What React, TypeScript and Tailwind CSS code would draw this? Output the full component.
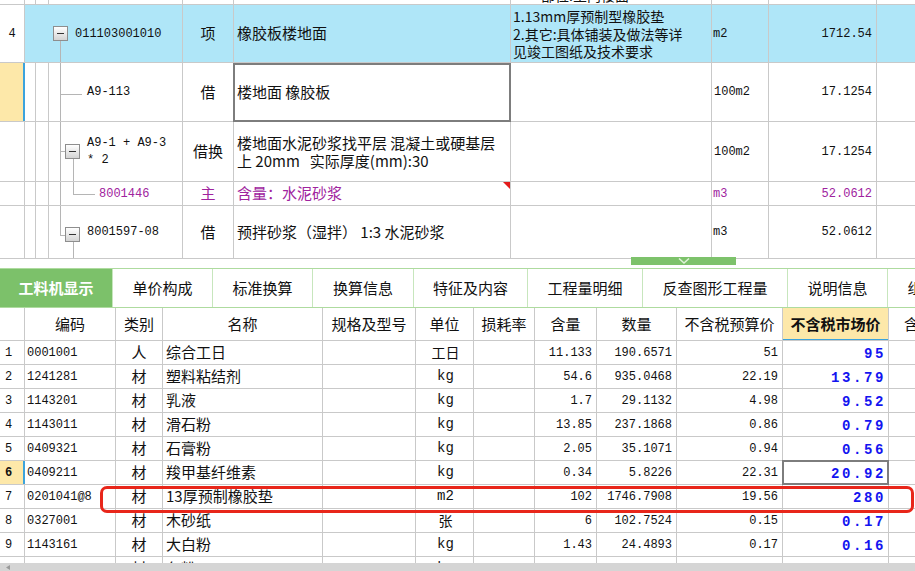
import type { ReactNode } from 'react'
import clsx from 'clsx'

const mono = "font-['Liberation_Mono','Noto_Sans_CJK_SC',monospace]"
const cjk = "font-['Noto_Sans_CJK_SC','Noto_Sans',sans-serif]"

function Cell({ className, children }: { className?: string; children?: ReactNode }) {
  return <div className={clsx('relative shrink-0 border-r border-[#c9c9c9]', className)}>{children}</div>
}

function Toggle({ className }: { className: string }) {
  return (
    <span
      className={clsx(
        'absolute flex h-[15px] w-[15px] items-center justify-center border border-[#8e8e8e] bg-linear-to-b from-white to-[#d4d4d4]',
        className,
      )}
    >
      <span className="h-px w-[7px] bg-[#333]" />
    </span>
  )
}

function VLine({ className }: { className: string }) {
  return <span className={clsx('absolute w-px bg-[#b5b5b5]', className)} />
}

function HLine({ className }: { className: string }) {
  return <span className={clsx('absolute h-px bg-[#b5b5b5]', className)} />
}

function TopSection() {
  return (
    <div className={clsx('shrink-0 text-[#111]', cjk)}>
      {/* row cut off at the top */}
      <div className="flex h-[5px] overflow-hidden border-b border-[#c9c9c9]">
        <Cell className="w-[25px]" />
        <Cell className="w-[11px]" />
        <Cell className="w-[13px]" />
        <Cell className="w-[134px]" />
        <Cell className="w-[51px]" />
        <Cell className="w-[277px]" />
        <Cell className="w-[201px] overflow-hidden">
          <div className="-mt-[13px] pl-[30px] text-[14px] leading-[17px]">部位:室内楼面</div>
        </Cell>
        <Cell className="w-[57px]" />
        <Cell className="w-[108px]" />
      </div>

      {/* 4 */}
      <div className="flex h-[58px] border-b border-[#c9c9c9]">
        <Cell className={clsx('flex w-[25px] items-center justify-center bg-white text-[12px]', mono)}>4</Cell>
        <Cell className={clsx('flex w-[158px] items-center bg-[#afe6f8] pl-[50px] text-[12px]', mono)}>
          <Toggle className="left-[28px] top-[21px]" />
          <VLine className="left-[35px] top-[36px] bottom-0" />
          011103001010
        </Cell>
        <Cell className="flex w-[51px] items-center justify-center bg-[#afe6f8] text-[15px]">项</Cell>
        <Cell className="flex w-[277px] items-center bg-[#afe6f8] pl-[3px] text-[15px]">橡胶板楼地面</Cell>
        <Cell className="flex w-[201px] flex-col justify-center bg-[#afe6f8] pl-[2px] pt-[2px] text-[14px] leading-[17.5px]">
          <span>1.13mm厚预制型橡胶垫</span>
          <span>2.其它:具体铺装及做法等详</span>
          <span>见竣工图纸及技术要求</span>
        </Cell>
        <Cell className={clsx('flex w-[57px] items-center bg-[#afe6f8] pl-[1px] text-[12px]', mono)}>m2</Cell>
        <Cell className={clsx('flex w-[108px] items-center justify-end bg-[#afe6f8] pr-[4px] text-[12px]', mono)}>
          1712.54
        </Cell>
        <div className="flex-1 bg-[#afe6f8]" />
      </div>

      {/* A9-113 */}
      <div className="flex h-[59px] border-b border-[#c9c9c9]">
        <div className="w-[25px] shrink-0 border-r-2 border-[#3ca3dc] bg-[#fde8a9]" />
        <Cell className="w-[11px]" />
        <Cell className="w-[13px]" />
        <Cell className={clsx('flex w-[134px] items-center pl-[38px] text-[12px]', mono)}>
          <VLine className="left-[11px] top-0 bottom-0" />
          <HLine className="left-[11px] top-[31px] w-[22px]" />
          A9-113
        </Cell>
        <Cell className="flex w-[51px] items-center justify-center text-[15px]">借</Cell>
        <Cell className="flex w-[277px] items-center pl-[3px] text-[15px]">
          <span className="absolute -left-px top-0 -right-px -bottom-px border-2 border-[#7d7d7d]" />
          楼地面 橡胶板
        </Cell>
        <Cell className="w-[201px]" />
        <Cell className={clsx('flex w-[57px] items-center pl-[2px] text-[12px]', mono)}>100m2</Cell>
        <Cell className={clsx('flex w-[108px] items-center justify-end pr-[4px] text-[12px]', mono)}>17.1254</Cell>
      </div>

      {/* A9-1 + A9-3 * 2 */}
      <div className="flex h-[60px] border-b border-[#c9c9c9]">
        <Cell className="w-[25px]" />
        <Cell className="w-[11px]" />
        <Cell className="w-[13px]" />
        <Cell className={clsx('flex w-[134px] flex-col justify-center pl-[38px] text-[12px] leading-[17px]', mono)}>
          <VLine className="left-[11px] top-0 bottom-0" />
          <HLine className="left-[11px] top-[29px] w-[5px]" />
          <Toggle className="left-[16px] top-[22px]" />
          <VLine className="left-[24px] top-[37px] bottom-0" />
          <span className="whitespace-pre">A9-1 + A9-3</span>
          <span>* 2</span>
        </Cell>
        <Cell className="flex w-[51px] items-center justify-center text-[15px]">借换</Cell>
        <Cell className="flex w-[277px] flex-col justify-center pl-[3px] text-[15px] leading-[18px]">
          <span>楼地面水泥砂浆找平层 混凝土或硬基层</span>
          <span className="whitespace-pre">上 20mm   实际厚度(mm):30</span>
        </Cell>
        <Cell className="w-[201px]" />
        <Cell className={clsx('flex w-[57px] items-center pl-[2px] text-[12px]', mono)}>100m2</Cell>
        <Cell className={clsx('flex w-[108px] items-center justify-end pr-[4px] text-[12px]', mono)}>17.1254</Cell>
      </div>

      {/* 8001446 */}
      <div className="flex h-[24px] border-b border-[#c9c9c9] text-[#a0239e]">
        <Cell className="w-[25px]" />
        <Cell className="w-[11px]" />
        <Cell className="w-[13px]" />
        <Cell className={clsx('flex w-[134px] items-center pl-[50px] text-[12px]', mono)}>
          <VLine className="left-[11px] top-0 bottom-0" />
          <VLine className="left-[24px] top-0 h-[12px]" />
          <HLine className="left-[24px] top-[12px] w-[22px]" />
          8001446
        </Cell>
        <Cell className="flex w-[51px] items-center justify-center text-[15px]">主</Cell>
        <Cell className="flex w-[277px] items-center pl-[3px] text-[15px]">
          <span className="absolute right-0 top-0 h-0 w-0 border-l-[7px] border-t-[7px] border-l-transparent border-t-[#e31b1b]" />
          含量：水泥砂浆
        </Cell>
        <Cell className="w-[201px]" />
        <Cell className={clsx('flex w-[57px] items-center pl-[1px] text-[12px]', mono)}>m3</Cell>
        <Cell className={clsx('flex w-[108px] items-center justify-end pr-[4px] text-[12px]', mono)}>52.0612</Cell>
      </div>

      {/* 8001597-08 */}
      <div className="flex h-[53px] border-b border-[#c9c9c9]">
        <Cell className="w-[25px]" />
        <Cell className="w-[11px]" />
        <Cell className="w-[13px]" />
        <Cell className={clsx('flex w-[134px] items-center pl-[38px] text-[12px]', mono)}>
          <VLine className="left-[11px] top-0 h-[29px]" />
          <HLine className="left-[11px] top-[29px] w-[5px]" />
          <Toggle className="left-[16px] top-[21px]" />
          <VLine className="left-[24px] top-[36px] bottom-0" />
          8001597-08
        </Cell>
        <Cell className="flex w-[51px] items-center justify-center text-[15px]">借</Cell>
        <Cell className="flex w-[277px] items-center whitespace-pre pl-[3px] text-[15px]">
          预拌砂浆（湿拌） 1:3 水泥砂浆
        </Cell>
        <Cell className="w-[201px]" />
        <Cell className={clsx('flex w-[57px] items-center pl-[1px] text-[12px]', mono)}>m3</Cell>
        <Cell className={clsx('flex w-[108px] items-center justify-end pr-[4px] text-[12px]', mono)}>52.0612</Cell>
      </div>

      {/* splitter */}
      <div className="relative h-[9px]">
        <div className="absolute left-[631px] top-[-2px] flex h-[8px] w-[105px] items-start justify-center bg-[#7dc26b]">
          <svg width="12" height="6" viewBox="0 0 12 6" className="mt-[1px]">
            <polyline points="1,0.5 6,5 11,0.5" fill="none" stroke="#dff3d8" strokeWidth="1.5" />
          </svg>
        </div>
      </div>
    </div>
  )
}

const tabs = [
  { label: '工料机显示', w: 'w-[113px]' },
  { label: '单价构成', w: 'w-[100px]' },
  { label: '标准换算', w: 'w-[100px]' },
  { label: '换算信息', w: 'w-[101px]' },
  { label: '特征及内容', w: 'w-[114px]' },
  { label: '工程量明细', w: 'w-[115px]' },
  { label: '反查图形工程量', w: 'w-[145px]' },
  { label: '说明信息', w: 'w-[100px]' },
  { label: '组价方案', w: 'w-[100px]' },
]

const cols = [
  { label: '', w: 'w-[25px]' },
  { label: '编码', w: 'w-[91px]' },
  { label: '类别', w: 'w-[47px]' },
  { label: '名称', w: 'w-[160px]' },
  { label: '规格及型号', w: 'w-[93px]' },
  { label: '单位', w: 'w-[58px]' },
  { label: '损耗率', w: 'w-[61px]' },
  { label: '含量', w: 'w-[62px]' },
  { label: '数量', w: 'w-[80px]' },
  { label: '不含税预算价', w: 'w-[106px]' },
  { label: '不含税市场价', w: 'w-[106px]' },
  { label: '含税市场价', w: 'w-[106px]' },
]

const rows = [
  ['0001001', '人', '综合工日', '工日', '11.133', '190.6571', '51', '95'],
  ['1241281', '材', '塑料粘结剂', 'kg', '54.6', '935.0468', '22.19', '13.79'],
  ['1143201', '材', '乳液', 'kg', '1.7', '29.1132', '4.98', '9.52'],
  ['1143011', '材', '滑石粉', 'kg', '13.85', '237.1868', '0.86', '0.79'],
  ['0409321', '材', '石膏粉', 'kg', '2.05', '35.1071', '0.94', '0.56'],
  ['0409211', '材', '羧甲基纤维素', 'kg', '0.34', '5.8226', '22.31', '20.92'],
  ['0201041@8', '材', '13厚预制橡胶垫', 'm2', '102', '1746.7908', '19.56', '280'],
  ['0327001', '材', '木砂纸', '张', '6', '102.7524', '0.15', '0.17'],
  ['1143161', '材', '大白粉', 'kg', '1.43', '24.4893', '0.17', '0.16'],
  ['0410301', '材', '色粉', 'kg', '3.67', '62.8451', '13.77', '1.05'],
]

function Bottom() {
  return (
    <div className={clsx('flex min-h-0 flex-1 flex-col text-[#111]', cjk)}>
      <div className="flex h-[40px] shrink-0 overflow-hidden border-y border-[#aedb9f]">
        {tabs.map((t, i) => (
          <div
            key={t.label}
            className={clsx(
              'flex shrink-0 items-center justify-center border-r border-[#c7e6bd] text-[15px]',
              t.w,
              i === 0 ? 'bg-[#7cc16a] font-bold text-white' : 'bg-white',
            )}
          >
            {t.label}
          </div>
        ))}
      </div>

      <div className="flex h-[33px] shrink-0 overflow-hidden border-b border-[#c9c9c9]">
        {cols.map((c, i) => (
          <div
            key={i}
            className={clsx(
              'relative flex shrink-0 items-center justify-center border-r border-[#c9c9c9] text-[15px]',
              c.w,
              i === 10 && 'bg-[#fde8a9] font-bold',
            )}
          >
            {c.label}
            {i === 10 && <span className="absolute inset-x-0 -bottom-px h-[2px] bg-[#3ca3dc]" />}
          </div>
        ))}
      </div>

      <div className="relative min-h-0 flex-1 overflow-hidden">
        {rows.map((r, i) => {
          const sel = i === 5
          return (
            <div key={i} className="flex h-[24px] shrink-0 border-b border-[#c9c9c9]">
              <div
                className={clsx(
                  'flex w-[25px] shrink-0 items-center pl-[5px] text-[12px]',
                  mono,
                  sel ? 'border-r-2 border-[#3ca3dc] bg-[#fde8a9] font-bold' : 'border-r border-[#c9c9c9]',
                )}
              >
                {i + 1}
              </div>
              <Cell className={clsx('flex w-[91px] items-center pl-[2px] text-[12px]', mono)}>{r[0]}</Cell>
              <Cell className="flex w-[47px] items-center justify-center text-[15px]">{r[1]}</Cell>
              <Cell className="flex w-[160px] items-center pl-[3px] text-[15px]">{r[2]}</Cell>
              <Cell className="w-[93px]" />
              <Cell
                className={clsx(
                  'flex w-[58px] items-center justify-center pl-[2px] text-[14px]',
                  r[3] === 'kg' || r[3] === 'm2' ? mono : cjk,
                )}
              >
                {r[3]}
              </Cell>
              <Cell className="w-[61px]" />
              <Cell className={clsx('flex w-[62px] items-center justify-end pr-[4px] text-[12px]', mono)}>{r[4]}</Cell>
              <Cell className={clsx('flex w-[80px] items-center justify-end pr-[4px] text-[12px]', mono)}>{r[5]}</Cell>
              <Cell className={clsx('flex w-[106px] items-center justify-end pr-[4px] text-[12px]', mono)}>{r[6]}</Cell>
              <Cell
                className={clsx(
                  'flex w-[106px] items-center justify-end pr-[2px] pt-[2px] text-[14px] leading-none font-bold tracking-[2.6px] text-[#1414f0]',
                  mono,
                )}
              >
                {sel && <span className="absolute -left-px -top-px -right-px -bottom-px border-2 border-[#7d7d7d]" />}
                {r[7]}
              </Cell>
              <Cell className="w-[106px]" />
            </div>
          )
        })}
        <div className="absolute left-[100px] top-[145px] h-[27px] w-[814px] rounded-[7px] border-[3px] border-[#e8261a]" />
      </div>

      <div className="flex h-[8px] shrink-0 items-center bg-[#d5d5d5] pl-[6px]">
        <svg width="4" height="5" viewBox="0 0 4 5">
          <polygon points="4,0 0,2.5 4,5" fill="#9a9a9a" />
        </svg>
      </div>
    </div>
  )
}

export default function App() {
  return (
    <div className="flex h-[571px] w-[915px] flex-col overflow-hidden bg-white">
      <TopSection />
      <Bottom />
    </div>
  )
}
